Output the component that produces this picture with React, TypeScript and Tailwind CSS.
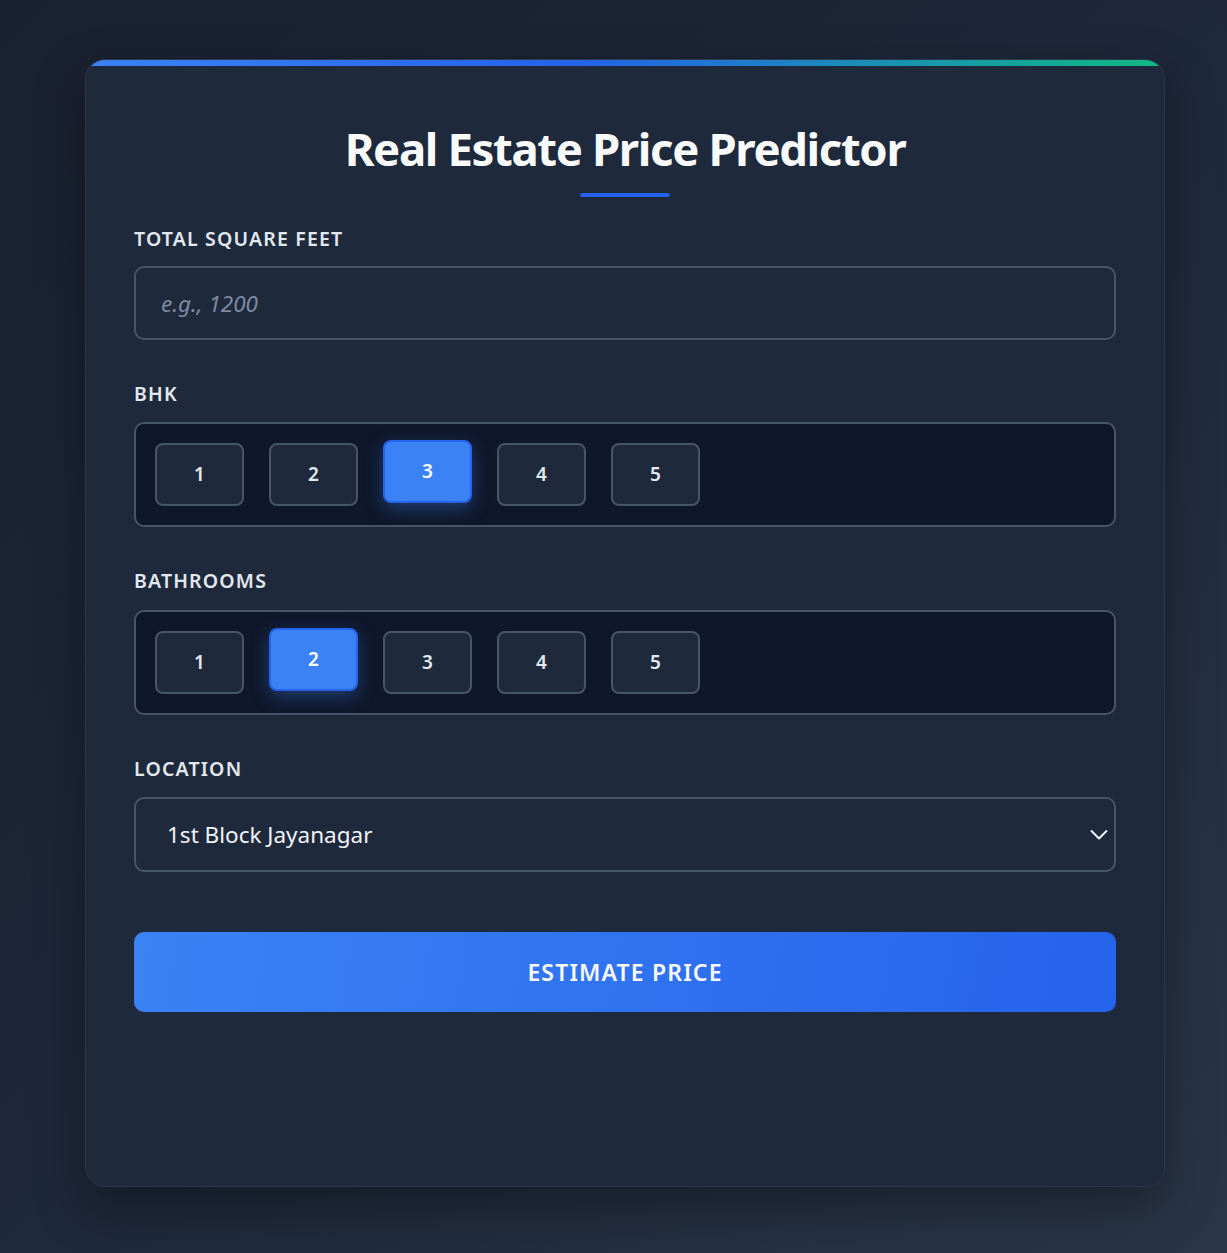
import { useState } from "react";

const OPTIONS = [1, 2, 3, 4, 5];

function Chooser({ value, onPick }: { value: number; onPick: (n: number) => void }) {
  return (
    <div className="flex gap-[25px] rounded-[10px] border-2 border-[#475569] bg-[#0f172a] px-[19px] py-[19px]">
      {OPTIONS.map((n) => {
        const on = n === value;
        return (
          <button
            key={n}
            onClick={() => onPick(n)}
            className={
              on
                ? "flex h-[63px] w-[89px] -translate-y-[3px] items-center justify-center rounded-[8px] border-2 border-[#2563eb] bg-[#3b82f6] text-[19px] font-semibold text-white shadow-[0_6px_18px_rgba(59,130,246,0.35)]"
                : "flex h-[63px] w-[89px] items-center justify-center rounded-[8px] border-2 border-[#475569] bg-[#1e293b] text-[19px] font-semibold text-[#e2e8f0]"
            }
          >
            {n}
          </button>
        );
      })}
    </div>
  );
}

export default function App() {
  const [sqft, setSqft] = useState<string>("");
  const [bhk, setBhk] = useState<number>(3);
  const [bath, setBath] = useState<number>(2);
  const [loc, setLoc] = useState<string>("1st Block Jayanagar");

  return (
    <main
      className="min-h-[1253px] w-full bg-[linear-gradient(135deg,#19202f_0%,#1e293b_55%,#2a3648_100%)] pl-[85px] pt-[59px] pb-[66px]"
      style={{ fontFamily: '"Noto Sans", "Open Sans", Arial, sans-serif' }}
    >
      <div className="relative h-[1128px] w-[1080px] overflow-hidden rounded-[20px] border border-[#2b374b] bg-[#1e293b] px-[48px] pt-[59px] shadow-[0_20px_50px_rgba(0,0,0,0.35)]">
        <div className="absolute left-0 right-0 top-0 h-[6px] bg-[linear-gradient(90deg,#3b82f6_0%,#2563eb_45%,#10b981_100%)]" />

        <h1 className="text-center text-[45.5px] font-bold leading-[58px] tracking-[-0.03em] text-[#f8fafc]">
          Real Estate Price Predictor
        </h1>
        <div className="mx-auto mt-[16px] h-[4px] w-[90px] rounded-full bg-[#2563eb]" />

        <div className="mt-[28px] flex flex-col">
          <label className="text-[19.5px] font-semibold uppercase leading-[27px] tracking-[0.06em] text-[#e2e8f0]">
            Total Square Feet
          </label>
          <input
            type="text"
            value={sqft}
            onChange={(e) => setSqft(e.target.value)}
            placeholder="e.g., 1200"
            className="mt-[14px] h-[74px] w-full rounded-[10px] border-2 border-[#475569] bg-[#1e293b] px-[25px] text-[22.5px] text-[#f1f5f9] outline-none placeholder:italic placeholder:text-[#7c8ba1]"
          />
        </div>

        <div className="mt-[40px] flex flex-col">
          <label className="mb-[15px] text-[19.5px] font-semibold uppercase leading-[27px] tracking-[0.06em] text-[#e2e8f0]">
            BHK
          </label>
          <Chooser value={bhk} onPick={setBhk} />
        </div>

        <div className="mt-[40px] flex flex-col">
          <label className="mb-[16px] text-[19.5px] font-semibold uppercase leading-[27px] tracking-[0.06em] text-[#e2e8f0]">
            Bathrooms
          </label>
          <Chooser value={bath} onPick={setBath} />
        </div>

        <div className="mt-[40px] flex flex-col">
          <label className="mb-[15px] text-[19.5px] font-semibold uppercase leading-[27px] tracking-[0.06em] text-[#e2e8f0]">
            Location
          </label>
          <div className="relative">
            <select
              value={loc}
              onChange={(e) => setLoc(e.target.value)}
              className="h-[75px] w-full appearance-none rounded-[10px] border-2 border-[#475569] bg-[#1e293b] px-[31px] text-[22.5px] text-[#f1f5f9] outline-none"
            >
              <option>1st Block Jayanagar</option>
              <option>2nd Phase Judicial Layout</option>
              <option>Whitefield</option>
            </select>
            <svg
              className="pointer-events-none absolute right-[8px] top-1/2 -translate-y-1/2"
              width="18"
              height="11"
              viewBox="0 0 18 11"
              fill="none"
              stroke="#f1f5f9"
              strokeWidth="2"
              strokeLinecap="round"
              strokeLinejoin="round"
            >
              <path d="M1.5 1.5l7.5 7.5 7.5-7.5" />
            </svg>
          </div>
        </div>

        <button className="mt-[60px] h-[80px] w-full rounded-[10px] bg-[linear-gradient(100deg,#3b82f6_0%,#2563eb_100%)] text-[23px] font-semibold uppercase tracking-[0.05em] text-[#f8fafc]">
          Estimate Price
        </button>
      </div>
    </main>
  );
}
